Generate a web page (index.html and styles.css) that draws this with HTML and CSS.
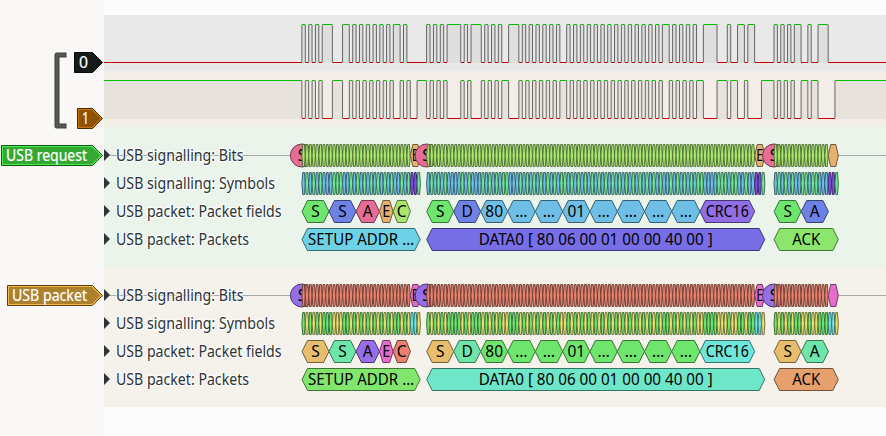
FILE: index.html
```html
<!DOCTYPE html>
<html lang="en">
<head>
<meta charset="utf-8">
<title>USB capture</title>
<link rel="stylesheet" href="styles.css">
</head>
<body>
<main class="viewer">
  <aside class="headers">
    <svg class="bracket" width="13" height="77" viewBox="0 0 13 77">
      <path class="bracket-edge" d="M12.5 3H3V74H12.5"/>
      <path class="bracket-core" d="M11.5 3H3V74H11.5"/>
    </svg>
    <div class="head channel" data-label="0" data-left="74" data-width="9" data-fill="#16191a" data-inner="#16191a" data-edge="#090b0b"></div>
    <div class="head channel" data-label="1" data-left="77" data-width="7" data-fill="#8f5202" data-inner="#c97709" data-edge="#472900"></div>
    <div class="head decoder-head" data-label="USB request" data-left="1" data-width="81" data-fill="#34a832" data-inner="#47f047" data-edge="#18521a"></div>
    <div class="head decoder-head" data-label="USB packet" data-left="7" data-width="75" data-fill="#ab812e" data-inner="#f7b943" data-edge="#554017"></div>
  </aside>
  <section class="traces">
    <div class="wave wave-a"></div>
    <div class="wave wave-b"></div>
    <div class="decoder request"></div>
    <div class="decoder packet"></div>
  </section>
</main>
<script src="script.js"></script>
</body>
</html>
```
FILE: styles.css
```css
* { box-sizing: border-box; }
body { margin: 0; background: #fcfcfc; font-family: "Noto Sans", "Open Sans", sans-serif; }
svg { display: block; }
.viewer { display: grid; grid-template-columns: 104px 782px; width: 886px; height: 436px; overflow: hidden; }
.headers { position: relative; background: #f9f8f6; padding-top: 15px; }
.bracket { position: absolute; left: 54px; top: 52px; }
.bracket path { fill: none; }
.bracket-edge { stroke: #3f413f; stroke-width: 5; stroke-linejoin: round; }
.bracket-core { stroke: #555753; stroke-width: 3; }
.head { display: flex; }
.channel { height: 56px; padding-top: 37px; }
.decoder-head { height: 140px; padding-top: 18px; }
.head text { fill: #fff; font-size: 15.5px; stroke: #fff; stroke-width: .2px; }
.traces { padding-top: 15px; }
.wave { height: 56px; }
.wave-a { background: #e9e9e9; }
.wave-b { background: #f3ede7; }
.wave .area { fill: #000; fill-opacity: .045; }
.wave .edge { stroke: #000; stroke-opacity: .56; stroke-width: 1; fill: none; }
.wave .high { stroke: #00c000; fill: none; }
.wave .low { stroke: #c00000; fill: none; }
.decoder { height: 140px; padding-top: 14px; }
.request { background: #eaf4eb; }
.packet { background: #f5f1eb; }
.axis { stroke: #a5aaa5; }
.arrow { fill: #2e3436; }
.label { font-size: 15.5px; fill: #2e3436; stroke: #fff; stroke-opacity: .75; stroke-width: 2.5px; stroke-linejoin: round; paint-order: stroke; }
.note { font-size: 15.5px; fill: #000; text-anchor: middle; }
```
FILE: script.js
```js
const LEFT = 104;
const SPAN = 782;

const reverse8 = (byte) => [...Array(8)].map((_, i) => (byte >> i) & 1);
const sync = [0, 0, 0, 0, 0, 0, 0, 1];
const transfers = [
  { x: 301.9, p: 3.387, bytes: [0x2d, 0x00, 0x10] },
  { x: 426.6, p: 3.417, bytes: [0xc3, 0x80, 0x06, 0x00, 0x01, 0x00, 0x00, 0x40, 0x00, 0xdd, 0x94] },
  { x: 774, p: 3.386, bytes: [0xd2] }
];

// NRZI: a zero toggles the line, a one keeps it. Each transfer ends in SE0, SE0, J.
for (const t of transfers) {
  let k = false;
  t.bits = sync.concat(...t.bytes.map(reverse8));
  t.symbols = t.bits.map((b) => { if (!b) k = !k; return k ? "K" : "J"; });
  t.symbols.push("0", "0", "J");
}

function wave(isHigh) {
  let level = isHigh("J");
  let start = LEFT;
  const runs = [];
  for (const t of transfers) {
    t.symbols.forEach((s, i) => {
      const next = isHigh(s);
      if (next !== level) {
        const x = t.x + i * t.p;
        runs.push([start, x, level]);
        start = x;
        level = next;
      }
    });
  }
  runs.push([start, LEFT + SPAN, level]);
  let area = "", edge = "", high = "", low = "";
  runs.forEach(([a, b, up], i) => {
    a -= LEFT; b -= LEFT;
    if (up) { area += `M${a} 10H${b}V48H${a}Z`; high += `M${a} 9.5H${b}`; }
    else low += `M${a} 47.5H${b}`;
    if (i) edge += `M${a} 10V47`;
  });
  return `<svg width="782" height="56"><path class="area" d="${area}"/><path class="edge" d="${edge}"/>` +
    `<path class="high" d="${high}"/><path class="low" d="${low}"/></svg>`;
}
document.querySelector(".wave-a").innerHTML = wave((s) => s === "K");
document.querySelector(".wave-b").innerHTML = wave((s) => s === "J");

const shade = (c) => "#" + [1, 3, 5].map((i) =>
  Math.round(parseInt(c.slice(i, i + 2), 16) * 0.5).toString(16).padStart(2, "0")).join("");

function note(x, text, width) {
  const fit = width ? ` textLength="${width}" lengthAdjust="spacingAndGlyphs"` : "";
  return `<text class="note" x="${x - LEFT}" y="20"${fit}>${text}</text>`;
}
function hex(a, b, color, text, width) {
  const c = Math.min((b - a) / 4, 5.5);
  const l = a - LEFT, r = b - LEFT;
  return `<path fill="${color}" stroke="${shade(color)}" d="M${l} 14.5L${l + c} 3.5H${r - c}L${r} 14.5L${r - c} 25.5H${l + c}Z"/>` +
    (text ? note((a + b) / 2, text, width) : "");
}
function row(title, width, body, axis) {
  return `<svg width="782" height="28">${axis ? '<path class="axis" d="M0 14.5H782"/>' : ""}` +
    `<path class="arrow" d="M0 8L6 14L0 20Z"/>` +
    `<text class="label" x="12" y="20" textLength="${width}" lengthAdjust="spacingAndGlyphs">${title}</text>${body}</svg>`;
}

const fields = [
  [302, 329, "S", "s"], [329, 356, "S", "pid"], [356, 379.5, "A", "addr"], [379.5, 393.1, "E", "ep", 8], [393.1, 410.4, "C", "crc5"],
  [426.7, 453.7, "S", "s"], [453.7, 480.7, "D", "pid"], [480.7, 507.7, "80", "data"], [507.7, 535.3, "…", "data"], [535.3, 562.7, "…", "data"],
  [562.7, 589.9, "01", "data"], [589.9, 617.3, "…", "data"], [617.3, 644.5, "…", "data"], [644.5, 671.7, "…", "data"],
  [671.7, 699.9, "…", "data"], [699.9, 754.7, "CRC16", "crc16", 43],
  [774.1, 801.2, "S", "s"], [801.2, 828.4, "A", "pid"]
];

function decoder(c) {
  let bits = "", symbols = "";
  for (const t of transfers) {
    const end = t.x + t.bits.length * t.p;
    bits += `<circle cx="${t.x - LEFT}" cy="14.5" r="11.5" fill="${c.sop}" stroke="${shade(c.sop)}"/>` + note(t.x, "S");
    t.bits.forEach((_, i) => { bits += hex(t.x + i * t.p, t.x + (i + 1) * t.p, c.bit); });
    bits += hex(end, end + 3 * t.p, c.eop, t.bytes.length > 1 ? "E" : "", 7);
    t.symbols.forEach((s, i) => { symbols += hex(t.x + i * t.p, t.x + (i + 1) * t.p, c[s]); });
  }
  return row("USB signalling: Bits", 127.5, bits, true) +
    row("USB signalling: Symbols", 159, symbols) +
    row("USB packet: Packet fields", 165.5, fields.map(([a, b, s, k, w]) => hex(a, b, c[k], s, w)).join("")) +
    row("USB packet: Packets", 133, hex(302, 420.2, c.setup, "SETUP ADDR …", 106) +
      hex(426.7, 764.7, c.data0, "DATA0 [ 80 06 00 01 00 00 40 00 ]", 234) +
      hex(774.1, 838.3, c.ack, "ACK", 28));
}
document.querySelector(".request").innerHTML = decoder({
  sop: "#e66e96", bit: "#a8e66e", eop: "#e6b06e", J: "#6ee696", K: "#6ec0e6", 0: "#7b50e0",
  s: "#6ee66e", pid: "#6e82e6", addr: "#e66e96", ep: "#e6b06e", crc5: "#a8e66e", data: "#6ebee6", crc16: "#906ee6",
  setup: "#6ed2e6", data0: "#786ee6", ack: "#8ce66e"
});
document.querySelector(".packet").innerHTML = decoder({
  sop: "#966ee6", bit: "#e6826e", eop: "#e66ec8", J: "#e6e06e", K: "#6ee66e", 0: "#6ee6e0",
  s: "#e6be6e", pid: "#6ee6aa", addr: "#966ee6", ep: "#e66ec8", crc5: "#e6826e", data: "#6ee66e", crc16: "#6ee6dc",
  setup: "#82e66e", data0: "#6ee6c8", ack: "#e6a06e"
});

for (const head of document.querySelectorAll(".head")) {
  const d = head.dataset, l = Number(d.left);
  head.innerHTML = `<svg width="104" height="21">` +
    `<path fill="${d.inner}" stroke="${d.edge}" d="M${l + 0.5} .5H92.5L102.5 10.5L92.5 20.5H${l + 0.5}Z"/>` +
    `<path fill="${d.fill}" d="M${l + 2} 2H92L100.5 10.5L92 19H${l + 2}Z"/>` +
    `<text x="${l + 5}" y="16" textLength="${d.width}" lengthAdjust="spacingAndGlyphs">${d.label}</text></svg>`;
}
```
